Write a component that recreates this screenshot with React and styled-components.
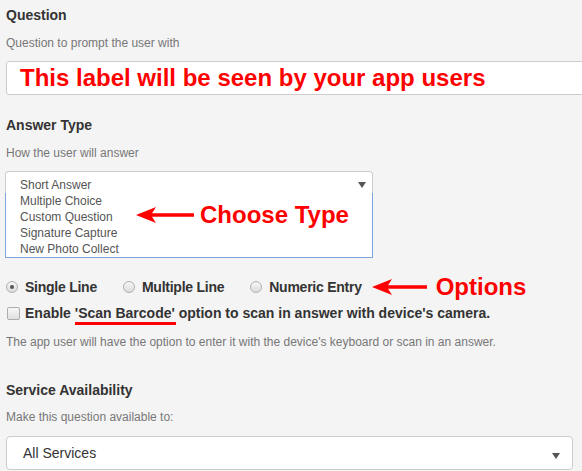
import React from "react";
import styled, { createGlobalStyle } from "styled-components";

const Global = createGlobalStyle`
  html, body { margin: 0; padding: 0; background: #f4f4f4; overflow: hidden; }
  * { box-sizing: border-box; }
`;

const Page = styled.div`
  width: 582px;
  height: 471px;
  overflow: hidden;
  background: #f4f4f4;
  padding: 5px 0 0 6px;
  font-family: "Liberation Sans", Arial, sans-serif;
  display: flex;
  flex-direction: column;
`;

const Heading = styled.div`
  font-size: 14px;
  font-weight: bold;
  color: #333;
  line-height: 20px;
  height: 20px;
  margin-top: ${(p) => p.$mt || 0}px;
`;

const Hint = styled.div`
  font-size: 12px;
  color: #777;
  line-height: 16px;
  height: 16px;
  margin-top: ${(p) => p.$mt || 0}px;
  white-space: nowrap;
`;

const TextInput = styled.div`
  margin-top: 10px;
  width: 620px;
  height: 34px;
  background: #fff;
  border: 1px solid #ccc;
  border-radius: 3px;
  padding-left: 13px;
  display: flex;
  align-items: center;
  font-size: 24px;
  font-weight: bold;
  color: #ff0000;
  white-space: nowrap;
`;

const ListSelect = styled.div`
  position: relative;
  margin-top: 10px;
  margin-left: -1px;
  width: 368px;
  display: flex;
  flex-direction: column;
`;

const ListHead = styled.div`
  height: 22px;
  background: #fff;
  border: 1px solid #ccc;
  border-bottom: none;
  border-radius: 4px 4px 0 0;
  padding: 5px 0 0 14px;
  display: flex;
  justify-content: space-between;
`;

const ListBody = styled.div`
  background: #fff;
  border: 1px solid #80a4de;
  border-top: none;
  padding-left: 14px;
`;

const Item = styled.div`
  font-size: 12px;
  line-height: 16px;
  height: 16px;
  color: #555;
  white-space: nowrap;
`;

const Caret = styled.svg`
  margin-right: 6px;
  margin-top: 5px;
  flex: none;
`;

const Annotation = styled.div`
  position: absolute;
  left: ${(p) => p.$x}px;
  top: ${(p) => p.$y}px;
  display: flex;
  align-items: center;
  gap: ${(p) => p.$gap || 6}px;
`;

const RedText = styled.span`
  font-size: 24px;
  font-weight: bold;
  color: #ff0000;
  white-space: nowrap;
  line-height: 28px;
`;

const RadioRow = styled.div`
  margin-top: 19px;
  height: 20px;
  display: flex;
  align-items: center;
`;

const RadioItem = styled.label`
  display: flex;
  align-items: center;
  gap: 7px;
  margin-right: ${(p) => p.$mr || 26}px;
  font-size: 14px;
  font-weight: bold;
  letter-spacing: -0.25px;
  color: #333;
  white-space: nowrap;
`;

const RadioDot = styled.span`
  width: 12px;
  height: 12px;
  border-radius: 50%;
  border: 1px solid #b0b0b0;
  background: linear-gradient(#f6f6f6, #dcdcdc);
  display: flex;
  align-items: center;
  justify-content: center;
  flex: none;
  &::after {
    content: "";
    width: 4px;
    height: 4px;
    border-radius: 50%;
    background: ${(p) => (p.$checked ? "#555" : "transparent")};
  }
`;

const OptionsNote = styled.div`
  display: flex;
  align-items: center;
  gap: 9px;
  margin-left: -16px;
`;

const CheckRow = styled.div`
  margin-top: 6px;
  height: 20px;
  display: flex;
  align-items: center;
  gap: 5px;
  margin-left: 1px;
  font-size: 14px;
  font-weight: bold;
  color: #333;
  white-space: nowrap;
`;

const CheckBox = styled.span`
  width: 13px;
  height: 13px;
  border: 1px solid #adadad;
  border-radius: 2px;
  background: linear-gradient(#f7f7f7, #e0e0e0);
  flex: none;
`;

const Underlined = styled.span`
  position: relative;
  &::after {
    content: "";
    position: absolute;
    left: 0;
    right: -1px;
    bottom: -4px;
    height: 3px;
    background: #ff0000;
  }
`;

const Select = styled.div`
  margin-top: 11px;
  width: 567px;
  height: 34px;
  background: #fff;
  border: 1px solid #ccc;
  border-radius: 4px;
  padding: 0 6px 0 16px;
  display: flex;
  align-items: center;
  justify-content: space-between;
  font-size: 14px;
  color: #333;
`;

function Arrow({ width }) {
  return (
    <svg width={width} height="18" viewBox={`0 0 ${width} 18`}>
      <path
        d={`M0 9 L20 1 L16 7.3 L${width} 7.3 L${width} 10.7 L16 10.7 L20 17 Z`}
        fill="#ff0000"
      />
    </svg>
  );
}

function Triangle() {
  return (
    <Caret width="8" height="6" viewBox="0 0 8 6">
      <path d="M0 0 L8 0 L4 6 Z" fill="#555" />
    </Caret>
  );
}

export default function App() {
  return (
    <>
      <Global />
      <Page>
        <Heading>Question</Heading>
        <Hint $mt={10}>Question to prompt the user with</Hint>
        <TextInput>This label will be seen by your app users</TextInput>

        <Heading $mt={20}>Answer Type</Heading>
        <Hint $mt={10}>How the user will answer</Hint>
        <ListSelect>
          <ListHead>
            <Item>Short Answer</Item>
            <Triangle />
          </ListHead>
          <ListBody>
            <Item>Multiple Choice</Item>
            <Item>Custom Question</Item>
            <Item>Signature Capture</Item>
            <Item>New Photo Collect</Item>
          </ListBody>
          <Annotation $x={131} $y={30} $gap={6}>
            <Arrow width={58} />
            <RedText>Choose Type</RedText>
          </Annotation>
        </ListSelect>

        <RadioRow>
          <RadioItem>
            <RadioDot $checked />
            Single Line
          </RadioItem>
          <RadioItem>
            <RadioDot />
            Multiple Line
          </RadioItem>
          <RadioItem>
            <RadioDot />
            Numeric Entry
          </RadioItem>
          <OptionsNote>
            <Arrow width={55} />
            <RedText>Options</RedText>
          </OptionsNote>
        </RadioRow>

        <CheckRow>
          <CheckBox />
          <span>
            Enable <Underlined>'Scan Barcode'</Underlined> option to scan in answer with device's camera.
          </span>
        </CheckRow>
        <Hint $mt={11}>
          The app user will have the option to enter it with the device's keyboard or scan in an answer.
        </Hint>

        <Heading $mt={30}>Service Availability</Heading>
        <Hint $mt={9}>Make this question available to:</Hint>
        <Select>
          <span>All Services</span>
          <Triangle />
        </Select>
      </Page>
    </>
  );
}
